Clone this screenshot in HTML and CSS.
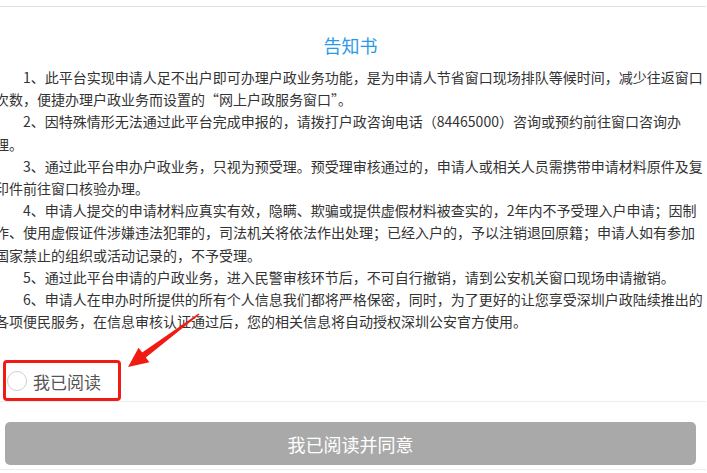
FILE: index.html
```html
<!DOCTYPE html>
<html lang="zh-CN">
<head>
<meta charset="utf-8">
<title>告知书</title>
<link rel="stylesheet" href="styles.css">
</head>
<body>
<div class="page">
  <div class="topbar"></div>
  <h1 class="title">告知书</h1>
  <div class="notice">
    <p>1、此平台实现申请人足不出户即可办理户政业务功能，是为申请人节省窗口现场排队等候时间，减少往返窗口次数，便捷办理户政业务而设置的“网上户政服务窗口”。</p>
    <p>2、因特殊情形无法通过此平台完成申报的，请拨打户政咨询电话（84465000）咨询或预约前往窗口咨询办理。</p>
    <p>3、通过此平台申办户政业务，只视为预受理。预受理审核通过的，申请人或相关人员需携带申请材料原件及复印件前往窗口核验办理。</p>
    <p>4、申请人提交的申请材料应真实有效，隐瞒、欺骗或提供虚假材料被查实的，2年内不予受理入户申请；因制作、使用虚假证件涉嫌违法犯罪的，司法机关将依法作出处理；已经入户的，予以注销退回原籍；申请人如有参加国家禁止的组织或活动记录的，不予受理。</p>
    <p>5、通过此平台申请的户政业务，进入民警审核环节后，不可自行撤销，请到公安机关窗口现场申请撤销。</p>
    <p>6、申请人在申办时所提供的所有个人信息我们都将严格保密，同时，为了更好的让您享受深圳户政陆续推出的各项便民服务，在信息审核认证通过后，您的相关信息将自动授权深圳公安官方使用。</p>
  </div>
  <label class="agree">
    <span class="radio"></span>
    <span class="agree-text">我已阅读</span>
  </label>
  <div class="actions">
    <button class="btn" type="button">我已阅读并同意</button>
  </div>
</div>
<div class="mark-box"></div>
<svg class="mark-arrow" width="707" height="473" viewBox="0 0 707 473">
  <polygon points="199.5,314.5 145.8,357.4 149.4,362.2 128,367 138.6,347.8 142.2,352.6 198.5,313.5" fill="#f01c14"/>
</svg>
</body>
</html>
```
FILE: styles.css
```css
html, body {
  margin: 0;
  padding: 0;
  background: #fff;
  overflow: hidden;
}
body {
  width: 707px;
  height: 473px;
  position: relative;
  font-family: "Noto Sans CJK SC", "Noto Sans", sans-serif;
}
.page {
  margin-left: -5px;
  width: 711px;
}
.topbar {
  height: 6px;
  border-bottom: 1px solid #e3e3e3;
}
.title {
  margin: 23px 0 6px;
  font-size: 18px;
  line-height: 30px;
  font-weight: normal;
  text-align: center;
  color: #2a9ae8;
}
.notice {
  font-size: 14px;
  line-height: 22.2px;
  color: #333;
}
.notice p {
  margin: 0;
  text-indent: 2em;
}
.agree {
  display: flex;
  align-items: center;
  gap: 6px;
  height: 40px;
  margin-top: 29px;
  padding-left: 12px;
  border-bottom: 1px solid #ececec;
}
.radio {
  width: 18px;
  height: 18px;
  border: 1px solid #cfcfcf;
  border-radius: 50%;
  background: #fff;
}
.agree-text {
  font-size: 17px;
  color: #555;
}
.actions {
  padding: 20px 10px 4px;
  border-bottom: 1px solid #ececec;
}
.btn {
  display: block;
  width: 100%;
  height: 43px;
  border: none;
  border-radius: 5px;
  background: #a9a9a9;
  color: #fff;
  font-family: "Noto Sans CJK SC", "Noto Sans", sans-serif;
  font-size: 18px;
  padding: 0;
}
.mark-box {
  position: absolute;
  left: 3px;
  top: 360px;
  width: 112px;
  height: 35px;
  border: 3px solid #f01c14;
  border-radius: 4px;
}
.mark-arrow {
  position: absolute;
  left: 0;
  top: 0;
  pointer-events: none;
}
```
